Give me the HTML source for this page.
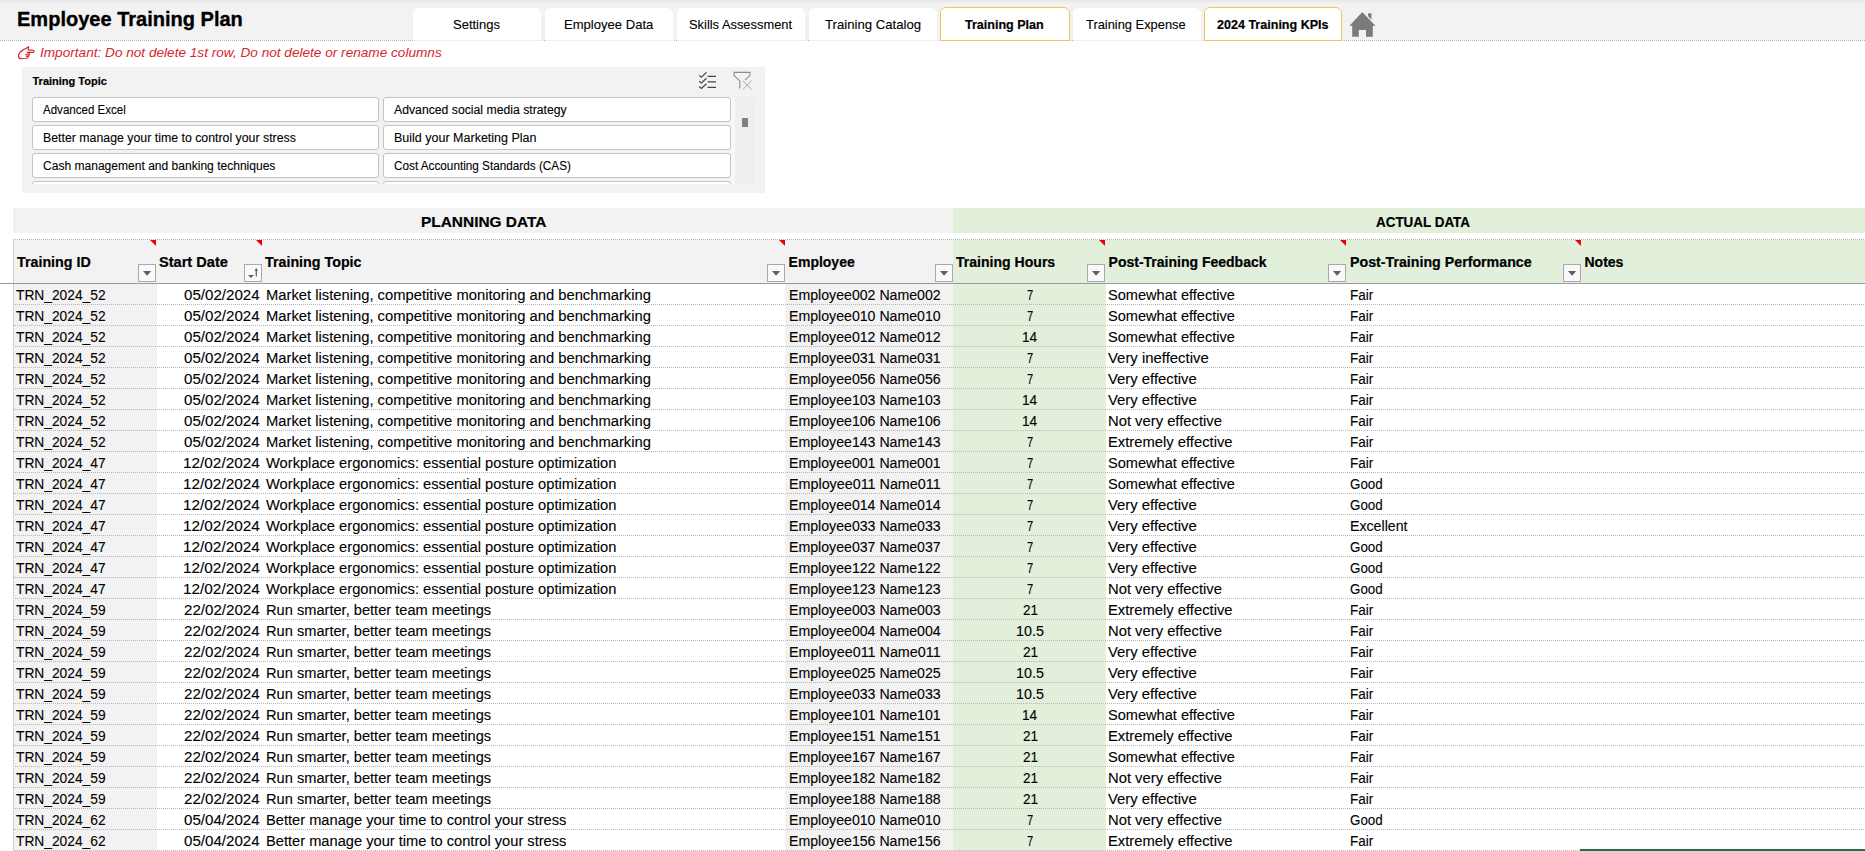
<!DOCTYPE html>
<html><head><meta charset="utf-8"><style>
html,body{margin:0;padding:0;}
body{width:1865px;height:851px;overflow:hidden;position:relative;background:#fff;font-family:"Liberation Sans", sans-serif;}
.t{position:absolute;white-space:nowrap;transform-origin:0 0;color:#000;}
.r{-webkit-text-stroke:0.1px currentColor;}
.bb{-webkit-text-stroke:0.2px currentColor;}
.a{position:absolute;}
</style></head><body>
<div class=a style='left:0px;top:0px;width:1865px;height:40px;background:#f2f2f2;'></div>
<div class=a style='left:0px;top:0px;width:1865px;height:4px;background:linear-gradient(#e6e6e6,#f2f2f2);'></div>
<div class=a style='left:0px;top:40px;width:1865px;height:1px;background:repeating-linear-gradient(90deg,#b6b6b6 0 1px,transparent 1px 2px);'></div>
<div class=a style='left:413px;top:8px;width:128px;height:32px;background:#fff;border-bottom:1px solid #f0f0f0;border-radius:6px 6px 0 0;'></div>
<div class=a style='left:545px;top:8px;width:128px;height:32px;background:#fff;border-bottom:1px solid #f0f0f0;border-radius:6px 6px 0 0;'></div>
<div class=a style='left:677px;top:8px;width:128px;height:32px;background:#fff;border-bottom:1px solid #f0f0f0;border-radius:6px 6px 0 0;'></div>
<div class=a style='left:809px;top:8px;width:128px;height:32px;background:#fff;border-bottom:1px solid #f0f0f0;border-radius:6px 6px 0 0;'></div>
<div class=a style='left:940px;top:7px;width:128px;height:32px;background:#fff;border:1px solid #efc658;border-radius:6px 6px 0 0;'></div>
<div class=a style='left:1073px;top:8px;width:128px;height:32px;background:#fff;border-bottom:1px solid #f0f0f0;border-radius:6px 6px 0 0;'></div>
<div class=a style='left:1204px;top:7px;width:136px;height:32px;background:#fff;border:1px solid #efc658;border-radius:6px 6px 0 0;'></div>
<svg class=a style='left:1344px;top:6px' width='40' height='36' viewBox='0 0 40 36'>
<path d='M24.1 7.2h3.4v6.5l-3.4-3z' fill='#7b7b7b'/>
<path d='M18.4 5.9L5.5 19.7h2.7v11h6.6v-6.8h7.2v6.8h6.8v-11h2.9z' fill='#7b7b7b'/>
<path d='M18.4 5.2L31.9 19.4' stroke='#f2f2f2' stroke-width='1.2'/>
<path d='M18.4 5.9L31.7 19.7' stroke='#7b7b7b' stroke-width='0.1'/>
</svg>
<svg class=a style='left:14px;top:42px' width='24' height='20' viewBox='0 0 24 20'>
<g fill='none' stroke='#cc2229' stroke-width='1.15' stroke-linejoin='round' stroke-linecap='round'>
<path d='M12.7 16.5L7.3 16.7C5.5 16.5 4.3 15 4.5 13.2C4.8 11 6.5 9.5 8.9 8L12.7 6.1L14.6 4.6L14.2 7.9L19.3 8.3C20.3 8.5 20.3 10.1 19.3 10.3L15.8 10.3L15 12.2L14.6 14.1L12.7 16.5'/>
<path d='M11.6 12.2H15M12 14.1H14.6M13.2 10.3H15.8'/>
</g>
</svg>
<div class=a style='left:22px;top:67px;width:743px;height:126px;background:#f2f2f2;'></div>
<div class=a style='left:0;top:97px;width:760px;height:87px;overflow:hidden'>
<div class=a style='left:32px;top:0px;width:345px;height:23px;background:#fff;border:1px solid #c4c4c4;border-radius:3px;'></div>
<div class=a style='left:383px;top:0px;width:346px;height:23px;background:#fff;border:1px solid #c4c4c4;border-radius:3px;'></div>
<div class=a style='left:32px;top:28px;width:345px;height:23px;background:#fff;border:1px solid #c4c4c4;border-radius:3px;'></div>
<div class=a style='left:383px;top:28px;width:346px;height:23px;background:#fff;border:1px solid #c4c4c4;border-radius:3px;'></div>
<div class=a style='left:32px;top:56px;width:345px;height:23px;background:#fff;border:1px solid #c4c4c4;border-radius:3px;'></div>
<div class=a style='left:383px;top:56px;width:346px;height:23px;background:#fff;border:1px solid #c4c4c4;border-radius:3px;'></div>
<div class=a style='left:32px;top:84px;width:345px;height:23px;background:#fff;border:1px solid #c4c4c4;border-radius:3px;'></div>
<div class=a style='left:383px;top:84px;width:346px;height:23px;background:#fff;border:1px solid #c4c4c4;border-radius:3px;'></div>
</div>
<div class=a style='left:731px;top:97px;width:4px;height:87px;background:#f8f8f8;'></div>
<div class=a style='left:735px;top:97px;width:19px;height:87px;background:#efefef;'></div>
<div class=a style='left:742px;top:118px;width:6px;height:9px;background:#808080;'></div>
<svg class=a style='left:692px;top:66px' width='66' height='30' viewBox='0 0 66 30'>
<g fill='none' stroke='#454545' stroke-width='1.2'>
<path d='M7.1 9.4L9.4 11.3L14.5 6.4'/><path d='M7.1 15.2L9.4 16.9L14.5 12.2'/><path d='M7.1 20.5L9.4 22.4L14.5 17.7'/>
<path d='M15.6 10.3H24M15.6 15.9H24M15.6 21.4H24' stroke-width='1.3'/>
</g>
<g fill='none' stroke='#8c8c8c' stroke-width='1.1'>
<path d='M47.8 22.6V14.9L42.1 9.6V6.4H57.9V9.6L53.1 13.8'/>
</g>
<g fill='none' stroke='#a8a8a8' stroke-width='1'>
<path d='M51 14.9L59.8 23.5M50.8 23.5L59.8 14.5'/>
</g>
</svg>
<div class=a style='left:13px;top:208px;width:940px;height:25px;background:#f2f2f2;'></div>
<div class=a style='left:953px;top:208px;width:912px;height:25px;background:#e2efda;'></div>
<div class=a style='left:13px;top:239px;width:1852px;height:1px;background:repeating-linear-gradient(90deg,#b6b6b6 0 1px,transparent 1px 2px);'></div>
<div class=a style='left:13px;top:240px;width:940px;height:43px;background:#f2f2f2;'></div>
<div class=a style='left:953px;top:240px;width:912px;height:43px;background:#e2efda;'></div>
<div class=a style='left:13px;top:284px;width:144px;height:567px;background:#f2f2f2;'></div>
<div class=a style='left:785px;top:284px;width:168px;height:567px;background:#f2f2f2;'></div>
<div class=a style='left:953px;top:284px;width:153px;height:567px;background:#e2efda;'></div>
<div class=a style='left:0px;top:283px;width:1865px;height:1px;background:#9a9a9a;'></div>
<div class=a style='left:13px;top:304px;width:1852px;height:1px;background:repeating-linear-gradient(90deg,#b6b6b6 0 1px,transparent 1px 2px);'></div>
<div class=a style='left:13px;top:325px;width:1852px;height:1px;background:repeating-linear-gradient(90deg,#b6b6b6 0 1px,transparent 1px 2px);'></div>
<div class=a style='left:13px;top:346px;width:1852px;height:1px;background:repeating-linear-gradient(90deg,#b6b6b6 0 1px,transparent 1px 2px);'></div>
<div class=a style='left:13px;top:367px;width:1852px;height:1px;background:repeating-linear-gradient(90deg,#b6b6b6 0 1px,transparent 1px 2px);'></div>
<div class=a style='left:13px;top:388px;width:1852px;height:1px;background:repeating-linear-gradient(90deg,#b6b6b6 0 1px,transparent 1px 2px);'></div>
<div class=a style='left:13px;top:409px;width:1852px;height:1px;background:repeating-linear-gradient(90deg,#b6b6b6 0 1px,transparent 1px 2px);'></div>
<div class=a style='left:13px;top:430px;width:1852px;height:1px;background:repeating-linear-gradient(90deg,#b6b6b6 0 1px,transparent 1px 2px);'></div>
<div class=a style='left:13px;top:451px;width:1852px;height:1px;background:repeating-linear-gradient(90deg,#b6b6b6 0 1px,transparent 1px 2px);'></div>
<div class=a style='left:13px;top:472px;width:1852px;height:1px;background:repeating-linear-gradient(90deg,#b6b6b6 0 1px,transparent 1px 2px);'></div>
<div class=a style='left:13px;top:493px;width:1852px;height:1px;background:repeating-linear-gradient(90deg,#b6b6b6 0 1px,transparent 1px 2px);'></div>
<div class=a style='left:13px;top:514px;width:1852px;height:1px;background:repeating-linear-gradient(90deg,#b6b6b6 0 1px,transparent 1px 2px);'></div>
<div class=a style='left:13px;top:535px;width:1852px;height:1px;background:repeating-linear-gradient(90deg,#b6b6b6 0 1px,transparent 1px 2px);'></div>
<div class=a style='left:13px;top:556px;width:1852px;height:1px;background:repeating-linear-gradient(90deg,#b6b6b6 0 1px,transparent 1px 2px);'></div>
<div class=a style='left:13px;top:577px;width:1852px;height:1px;background:repeating-linear-gradient(90deg,#b6b6b6 0 1px,transparent 1px 2px);'></div>
<div class=a style='left:13px;top:598px;width:1852px;height:1px;background:repeating-linear-gradient(90deg,#b6b6b6 0 1px,transparent 1px 2px);'></div>
<div class=a style='left:13px;top:619px;width:1852px;height:1px;background:repeating-linear-gradient(90deg,#b6b6b6 0 1px,transparent 1px 2px);'></div>
<div class=a style='left:13px;top:640px;width:1852px;height:1px;background:repeating-linear-gradient(90deg,#b6b6b6 0 1px,transparent 1px 2px);'></div>
<div class=a style='left:13px;top:661px;width:1852px;height:1px;background:repeating-linear-gradient(90deg,#b6b6b6 0 1px,transparent 1px 2px);'></div>
<div class=a style='left:13px;top:682px;width:1852px;height:1px;background:repeating-linear-gradient(90deg,#b6b6b6 0 1px,transparent 1px 2px);'></div>
<div class=a style='left:13px;top:703px;width:1852px;height:1px;background:repeating-linear-gradient(90deg,#b6b6b6 0 1px,transparent 1px 2px);'></div>
<div class=a style='left:13px;top:724px;width:1852px;height:1px;background:repeating-linear-gradient(90deg,#b6b6b6 0 1px,transparent 1px 2px);'></div>
<div class=a style='left:13px;top:745px;width:1852px;height:1px;background:repeating-linear-gradient(90deg,#b6b6b6 0 1px,transparent 1px 2px);'></div>
<div class=a style='left:13px;top:766px;width:1852px;height:1px;background:repeating-linear-gradient(90deg,#b6b6b6 0 1px,transparent 1px 2px);'></div>
<div class=a style='left:13px;top:787px;width:1852px;height:1px;background:repeating-linear-gradient(90deg,#b6b6b6 0 1px,transparent 1px 2px);'></div>
<div class=a style='left:13px;top:808px;width:1852px;height:1px;background:repeating-linear-gradient(90deg,#b6b6b6 0 1px,transparent 1px 2px);'></div>
<div class=a style='left:13px;top:829px;width:1852px;height:1px;background:repeating-linear-gradient(90deg,#b6b6b6 0 1px,transparent 1px 2px);'></div>
<div class=a style='left:13px;top:850px;width:1852px;height:1px;background:repeating-linear-gradient(90deg,#b6b6b6 0 1px,transparent 1px 2px);'></div>
<div class=a style='left:13px;top:240px;width:1px;height:611px;background:repeating-linear-gradient(180deg,#b6b6b6 0 1px,transparent 1px 2px);'></div>
<div class=a style='left:138px;top:264px;width:16px;height:16px;background:#f9f9fb;border:1px solid #a9a9a9;'></div>
<svg class=a style='left:138px;top:264px' width='18' height='18' viewBox='0 0 18 18'><path d='M5 7H13.2L9.1 11.8Z' fill='#5f5f5f'/></svg>
<div class=a style='left:767px;top:264px;width:16px;height:16px;background:#f9f9fb;border:1px solid #a9a9a9;'></div>
<svg class=a style='left:767px;top:264px' width='18' height='18' viewBox='0 0 18 18'><path d='M5 7H13.2L9.1 11.8Z' fill='#5f5f5f'/></svg>
<div class=a style='left:935px;top:264px;width:16px;height:16px;background:#f9f9fb;border:1px solid #a9a9a9;'></div>
<svg class=a style='left:935px;top:264px' width='18' height='18' viewBox='0 0 18 18'><path d='M5 7H13.2L9.1 11.8Z' fill='#5f5f5f'/></svg>
<div class=a style='left:1087px;top:264px;width:16px;height:16px;background:#f9f9fb;border:1px solid #a9a9a9;'></div>
<svg class=a style='left:1087px;top:264px' width='18' height='18' viewBox='0 0 18 18'><path d='M5 7H13.2L9.1 11.8Z' fill='#5f5f5f'/></svg>
<div class=a style='left:1328px;top:264px;width:16px;height:16px;background:#f9f9fb;border:1px solid #a9a9a9;'></div>
<svg class=a style='left:1328px;top:264px' width='18' height='18' viewBox='0 0 18 18'><path d='M5 7H13.2L9.1 11.8Z' fill='#5f5f5f'/></svg>
<div class=a style='left:1563px;top:264px;width:16px;height:16px;background:#f9f9fb;border:1px solid #a9a9a9;'></div>
<svg class=a style='left:1563px;top:264px' width='18' height='18' viewBox='0 0 18 18'><path d='M5 7H13.2L9.1 11.8Z' fill='#5f5f5f'/></svg>
<div class=a style='left:244px;top:264px;width:16px;height:16px;background:#f9f9fb;border:1px solid #a9a9a9;'></div>
<svg class=a style='left:244px;top:264px' width='18' height='18' viewBox='0 0 18 18'><path d='M4 11H10L7 14Z' fill='#5f5f5f'/><path d='M12.3 4.5V12.5' stroke='#5f5f5f' stroke-width='1.2'/><path d='M10.6 7L12.3 4.3L14 7Z' fill='#5f5f5f'/></svg>
<svg class=a style='left:150px;top:240px' width='6' height='6' viewBox='0 0 6 6'><path d='M0 0H6V6Z' fill='#e8000b'/></svg>
<svg class=a style='left:256px;top:240px' width='6' height='6' viewBox='0 0 6 6'><path d='M0 0H6V6Z' fill='#e8000b'/></svg>
<svg class=a style='left:779px;top:240px' width='6' height='6' viewBox='0 0 6 6'><path d='M0 0H6V6Z' fill='#e8000b'/></svg>
<svg class=a style='left:1099px;top:240px' width='6' height='6' viewBox='0 0 6 6'><path d='M0 0H6V6Z' fill='#e8000b'/></svg>
<svg class=a style='left:1340px;top:240px' width='6' height='6' viewBox='0 0 6 6'><path d='M0 0H6V6Z' fill='#e8000b'/></svg>
<svg class=a style='left:1575px;top:240px' width='6' height='6' viewBox='0 0 6 6'><path d='M0 0H6V6Z' fill='#e8000b'/></svg>
<div class=a style='left:1580px;top:849px;width:285px;height:2px;background:#217346;'></div>
<div class='t bb' style='left:17.05px;top:9px;font-family:"Liberation Sans", sans-serif;font-size:21px;font-weight:bold;font-style:normal;line-height:20px;transform:scaleX(0.9532);-webkit-text-stroke:0.35px #000;'>Employee Training Plan</div>
<div class='t r' style='left:453.00px;top:15px;font-family:"Liberation Sans", sans-serif;font-size:13px;font-weight:normal;font-style:normal;line-height:20px;'>Settings</div>
<div class='t r' style='left:564.00px;top:15px;font-family:"Liberation Sans", sans-serif;font-size:13px;font-weight:normal;font-style:normal;line-height:20px;transform:scaleX(1.0045);'>Employee Data</div>
<div class='t r' style='left:689.00px;top:15px;font-family:"Liberation Sans", sans-serif;font-size:13px;font-weight:normal;font-style:normal;line-height:20px;transform:scaleX(0.9904);'>Skills Assessment</div>
<div class='t r' style='left:824.50px;top:15px;font-family:"Liberation Sans", sans-serif;font-size:13px;font-weight:normal;font-style:normal;line-height:20px;transform:scaleX(1.0126);'>Training Catalog</div>
<div class='t bb' style='left:965.00px;top:15px;font-family:"Liberation Sans", sans-serif;font-size:13px;font-weight:bold;font-style:normal;line-height:20px;transform:scaleX(0.9634);'>Training Plan</div>
<div class='t r' style='left:1086.30px;top:15px;font-family:"Liberation Sans", sans-serif;font-size:13px;font-weight:normal;font-style:normal;line-height:20px;transform:scaleX(0.9901);'>Training Expense</div>
<div class='t bb' style='left:1217.00px;top:15px;font-family:"Liberation Sans", sans-serif;font-size:13px;font-weight:bold;font-style:normal;line-height:20px;transform:scaleX(0.9652);'>2024 Training KPIs</div>
<div class='t' style='left:40.00px;top:43px;font-family:"Liberation Sans", sans-serif;font-size:13px;font-weight:normal;font-style:italic;line-height:20px;transform:scaleX(1.0469);color:#d6262d;'>Important: Do not delete 1st row, Do not delete or rename columns</div>
<div class='t bb' style='left:32.50px;top:71px;font-family:"Liberation Sans", sans-serif;font-size:11px;font-weight:bold;font-style:normal;line-height:20px;'>Training Topic</div>
<div class='t r' style='left:42.60px;top:100px;font-family:"Liberation Sans", sans-serif;font-size:12px;font-weight:normal;font-style:normal;line-height:20px;transform:scaleX(0.9616);'>Advanced Excel</div>
<div class='t r' style='left:393.50px;top:100px;font-family:"Liberation Sans", sans-serif;font-size:12px;font-weight:normal;font-style:normal;line-height:20px;transform:scaleX(1.0194);'>Advanced social media strategy</div>
<div class='t r' style='left:42.60px;top:128px;font-family:"Liberation Sans", sans-serif;font-size:12px;font-weight:normal;font-style:normal;line-height:20px;transform:scaleX(1.0276);'>Better manage your time to control your stress</div>
<div class='t r' style='left:393.50px;top:128px;font-family:"Liberation Sans", sans-serif;font-size:12px;font-weight:normal;font-style:normal;line-height:20px;transform:scaleX(1.0423);'>Build your Marketing Plan</div>
<div class='t r' style='left:42.60px;top:156px;font-family:"Liberation Sans", sans-serif;font-size:12px;font-weight:normal;font-style:normal;line-height:20px;transform:scaleX(1.0039);'>Cash management and banking techniques</div>
<div class='t r' style='left:393.50px;top:156px;font-family:"Liberation Sans", sans-serif;font-size:12px;font-weight:normal;font-style:normal;line-height:20px;transform:scaleX(0.9785);'>Cost Accounting Standards (CAS)</div>
<div class='t bb' style='left:420.60px;top:212px;font-family:"Liberation Sans", sans-serif;font-size:14px;font-weight:bold;font-style:normal;line-height:20px;transform:scaleX(1.1018);'>PLANNING DATA</div>
<div class='t bb' style='left:1376.40px;top:212px;font-family:"Liberation Sans", sans-serif;font-size:14px;font-weight:bold;font-style:normal;line-height:20px;transform:scaleX(0.9592);'>ACTUAL DATA</div>
<div class='t bb' style='left:16.50px;top:252px;font-family:"Liberation Sans", sans-serif;font-size:14px;font-weight:bold;font-style:normal;line-height:20px;transform:scaleX(1.0194);'>Training ID</div>
<div class='t bb' style='left:159.30px;top:252px;font-family:"Liberation Sans", sans-serif;font-size:14px;font-weight:bold;font-style:normal;line-height:20px;transform:scaleX(1.0409);'>Start Date</div>
<div class='t bb' style='left:265.10px;top:252px;font-family:"Liberation Sans", sans-serif;font-size:14px;font-weight:bold;font-style:normal;line-height:20px;transform:scaleX(1.0200);'>Training Topic</div>
<div class='t bb' style='left:788.60px;top:252px;font-family:"Liberation Sans", sans-serif;font-size:14px;font-weight:bold;font-style:normal;line-height:20px;'>Employee</div>
<div class='t bb' style='left:956.40px;top:252px;font-family:"Liberation Sans", sans-serif;font-size:14px;font-weight:bold;font-style:normal;line-height:20px;transform:scaleX(1.0040);'>Training Hours</div>
<div class='t bb' style='left:1108.60px;top:252px;font-family:"Liberation Sans", sans-serif;font-size:14px;font-weight:bold;font-style:normal;line-height:20px;'>Post-Training Feedback</div>
<div class='t bb' style='left:1349.70px;top:252px;font-family:"Liberation Sans", sans-serif;font-size:14px;font-weight:bold;font-style:normal;line-height:20px;transform:scaleX(1.0151);'>Post-Training Performance</div>
<div class='t bb' style='left:1584.50px;top:252px;font-family:"Liberation Sans", sans-serif;font-size:14px;font-weight:bold;font-style:normal;line-height:20px;'>Notes</div>
<div class='t r' style='left:16.00px;top:285px;font-family:"Liberation Sans", sans-serif;font-size:14px;font-weight:normal;font-style:normal;line-height:20px;transform:scaleX(0.9835);'>TRN_2024_52</div>
<div class='t r' style='left:184.20px;top:285px;font-family:"Liberation Sans", sans-serif;font-size:14px;font-weight:normal;font-style:normal;line-height:20px;transform:scaleX(1.0800);'>05/02/2024</div>
<div class='t r' style='left:266.00px;top:285px;font-family:"Liberation Sans", sans-serif;font-size:14px;font-weight:normal;font-style:normal;line-height:20px;transform:scaleX(1.0548);'>Market listening, competitive monitoring and benchmarking</div>
<div class='t r' style='left:788.80px;top:285px;font-family:"Liberation Sans", sans-serif;font-size:14px;font-weight:normal;font-style:normal;line-height:20px;transform:scaleX(1.0100);'>Employee002 Name002</div>
<div class='t r' style='left:1026.80px;top:285px;font-family:"Liberation Sans", sans-serif;font-size:14px;font-weight:normal;font-style:normal;line-height:20px;transform:scaleX(0.8000);'>7</div>
<div class='t r' style='left:1108.30px;top:285px;font-family:"Liberation Sans", sans-serif;font-size:14px;font-weight:normal;font-style:normal;line-height:20px;transform:scaleX(1.0410);'>Somewhat effective</div>
<div class='t r' style='left:1349.90px;top:285px;font-family:"Liberation Sans", sans-serif;font-size:14px;font-weight:normal;font-style:normal;line-height:20px;transform:scaleX(0.9667);'>Fair</div>
<div class='t r' style='left:16.00px;top:306px;font-family:"Liberation Sans", sans-serif;font-size:14px;font-weight:normal;font-style:normal;line-height:20px;transform:scaleX(0.9835);'>TRN_2024_52</div>
<div class='t r' style='left:184.20px;top:306px;font-family:"Liberation Sans", sans-serif;font-size:14px;font-weight:normal;font-style:normal;line-height:20px;transform:scaleX(1.0800);'>05/02/2024</div>
<div class='t r' style='left:266.00px;top:306px;font-family:"Liberation Sans", sans-serif;font-size:14px;font-weight:normal;font-style:normal;line-height:20px;transform:scaleX(1.0548);'>Market listening, competitive monitoring and benchmarking</div>
<div class='t r' style='left:788.80px;top:306px;font-family:"Liberation Sans", sans-serif;font-size:14px;font-weight:normal;font-style:normal;line-height:20px;transform:scaleX(1.0100);'>Employee010 Name010</div>
<div class='t r' style='left:1026.80px;top:306px;font-family:"Liberation Sans", sans-serif;font-size:14px;font-weight:normal;font-style:normal;line-height:20px;transform:scaleX(0.8000);'>7</div>
<div class='t r' style='left:1108.30px;top:306px;font-family:"Liberation Sans", sans-serif;font-size:14px;font-weight:normal;font-style:normal;line-height:20px;transform:scaleX(1.0410);'>Somewhat effective</div>
<div class='t r' style='left:1349.90px;top:306px;font-family:"Liberation Sans", sans-serif;font-size:14px;font-weight:normal;font-style:normal;line-height:20px;transform:scaleX(0.9667);'>Fair</div>
<div class='t r' style='left:16.00px;top:327px;font-family:"Liberation Sans", sans-serif;font-size:14px;font-weight:normal;font-style:normal;line-height:20px;transform:scaleX(0.9835);'>TRN_2024_52</div>
<div class='t r' style='left:184.20px;top:327px;font-family:"Liberation Sans", sans-serif;font-size:14px;font-weight:normal;font-style:normal;line-height:20px;transform:scaleX(1.0800);'>05/02/2024</div>
<div class='t r' style='left:266.00px;top:327px;font-family:"Liberation Sans", sans-serif;font-size:14px;font-weight:normal;font-style:normal;line-height:20px;transform:scaleX(1.0548);'>Market listening, competitive monitoring and benchmarking</div>
<div class='t r' style='left:788.80px;top:327px;font-family:"Liberation Sans", sans-serif;font-size:14px;font-weight:normal;font-style:normal;line-height:20px;transform:scaleX(1.0100);'>Employee012 Name012</div>
<div class='t r' style='left:1021.73px;top:327px;font-family:"Liberation Sans", sans-serif;font-size:14px;font-weight:normal;font-style:normal;line-height:20px;transform:scaleX(0.9733);'>14</div>
<div class='t r' style='left:1108.30px;top:327px;font-family:"Liberation Sans", sans-serif;font-size:14px;font-weight:normal;font-style:normal;line-height:20px;transform:scaleX(1.0410);'>Somewhat effective</div>
<div class='t r' style='left:1349.90px;top:327px;font-family:"Liberation Sans", sans-serif;font-size:14px;font-weight:normal;font-style:normal;line-height:20px;transform:scaleX(0.9667);'>Fair</div>
<div class='t r' style='left:16.00px;top:348px;font-family:"Liberation Sans", sans-serif;font-size:14px;font-weight:normal;font-style:normal;line-height:20px;transform:scaleX(0.9835);'>TRN_2024_52</div>
<div class='t r' style='left:184.20px;top:348px;font-family:"Liberation Sans", sans-serif;font-size:14px;font-weight:normal;font-style:normal;line-height:20px;transform:scaleX(1.0800);'>05/02/2024</div>
<div class='t r' style='left:266.00px;top:348px;font-family:"Liberation Sans", sans-serif;font-size:14px;font-weight:normal;font-style:normal;line-height:20px;transform:scaleX(1.0548);'>Market listening, competitive monitoring and benchmarking</div>
<div class='t r' style='left:788.80px;top:348px;font-family:"Liberation Sans", sans-serif;font-size:14px;font-weight:normal;font-style:normal;line-height:20px;transform:scaleX(1.0100);'>Employee031 Name031</div>
<div class='t r' style='left:1026.80px;top:348px;font-family:"Liberation Sans", sans-serif;font-size:14px;font-weight:normal;font-style:normal;line-height:20px;transform:scaleX(0.8000);'>7</div>
<div class='t r' style='left:1108.30px;top:348px;font-family:"Liberation Sans", sans-serif;font-size:14px;font-weight:normal;font-style:normal;line-height:20px;transform:scaleX(1.0632);'>Very ineffective</div>
<div class='t r' style='left:1349.90px;top:348px;font-family:"Liberation Sans", sans-serif;font-size:14px;font-weight:normal;font-style:normal;line-height:20px;transform:scaleX(0.9667);'>Fair</div>
<div class='t r' style='left:16.00px;top:369px;font-family:"Liberation Sans", sans-serif;font-size:14px;font-weight:normal;font-style:normal;line-height:20px;transform:scaleX(0.9835);'>TRN_2024_52</div>
<div class='t r' style='left:184.20px;top:369px;font-family:"Liberation Sans", sans-serif;font-size:14px;font-weight:normal;font-style:normal;line-height:20px;transform:scaleX(1.0800);'>05/02/2024</div>
<div class='t r' style='left:266.00px;top:369px;font-family:"Liberation Sans", sans-serif;font-size:14px;font-weight:normal;font-style:normal;line-height:20px;transform:scaleX(1.0548);'>Market listening, competitive monitoring and benchmarking</div>
<div class='t r' style='left:788.80px;top:369px;font-family:"Liberation Sans", sans-serif;font-size:14px;font-weight:normal;font-style:normal;line-height:20px;transform:scaleX(1.0100);'>Employee056 Name056</div>
<div class='t r' style='left:1026.80px;top:369px;font-family:"Liberation Sans", sans-serif;font-size:14px;font-weight:normal;font-style:normal;line-height:20px;transform:scaleX(0.8000);'>7</div>
<div class='t r' style='left:1108.30px;top:369px;font-family:"Liberation Sans", sans-serif;font-size:14px;font-weight:normal;font-style:normal;line-height:20px;transform:scaleX(1.0595);'>Very effective</div>
<div class='t r' style='left:1349.90px;top:369px;font-family:"Liberation Sans", sans-serif;font-size:14px;font-weight:normal;font-style:normal;line-height:20px;transform:scaleX(0.9667);'>Fair</div>
<div class='t r' style='left:16.00px;top:390px;font-family:"Liberation Sans", sans-serif;font-size:14px;font-weight:normal;font-style:normal;line-height:20px;transform:scaleX(0.9835);'>TRN_2024_52</div>
<div class='t r' style='left:184.20px;top:390px;font-family:"Liberation Sans", sans-serif;font-size:14px;font-weight:normal;font-style:normal;line-height:20px;transform:scaleX(1.0800);'>05/02/2024</div>
<div class='t r' style='left:266.00px;top:390px;font-family:"Liberation Sans", sans-serif;font-size:14px;font-weight:normal;font-style:normal;line-height:20px;transform:scaleX(1.0548);'>Market listening, competitive monitoring and benchmarking</div>
<div class='t r' style='left:788.80px;top:390px;font-family:"Liberation Sans", sans-serif;font-size:14px;font-weight:normal;font-style:normal;line-height:20px;transform:scaleX(1.0100);'>Employee103 Name103</div>
<div class='t r' style='left:1021.73px;top:390px;font-family:"Liberation Sans", sans-serif;font-size:14px;font-weight:normal;font-style:normal;line-height:20px;transform:scaleX(0.9733);'>14</div>
<div class='t r' style='left:1108.30px;top:390px;font-family:"Liberation Sans", sans-serif;font-size:14px;font-weight:normal;font-style:normal;line-height:20px;transform:scaleX(1.0595);'>Very effective</div>
<div class='t r' style='left:1349.90px;top:390px;font-family:"Liberation Sans", sans-serif;font-size:14px;font-weight:normal;font-style:normal;line-height:20px;transform:scaleX(0.9667);'>Fair</div>
<div class='t r' style='left:16.00px;top:411px;font-family:"Liberation Sans", sans-serif;font-size:14px;font-weight:normal;font-style:normal;line-height:20px;transform:scaleX(0.9835);'>TRN_2024_52</div>
<div class='t r' style='left:184.20px;top:411px;font-family:"Liberation Sans", sans-serif;font-size:14px;font-weight:normal;font-style:normal;line-height:20px;transform:scaleX(1.0800);'>05/02/2024</div>
<div class='t r' style='left:266.00px;top:411px;font-family:"Liberation Sans", sans-serif;font-size:14px;font-weight:normal;font-style:normal;line-height:20px;transform:scaleX(1.0548);'>Market listening, competitive monitoring and benchmarking</div>
<div class='t r' style='left:788.80px;top:411px;font-family:"Liberation Sans", sans-serif;font-size:14px;font-weight:normal;font-style:normal;line-height:20px;transform:scaleX(1.0100);'>Employee106 Name106</div>
<div class='t r' style='left:1021.73px;top:411px;font-family:"Liberation Sans", sans-serif;font-size:14px;font-weight:normal;font-style:normal;line-height:20px;transform:scaleX(0.9733);'>14</div>
<div class='t r' style='left:1108.30px;top:411px;font-family:"Liberation Sans", sans-serif;font-size:14px;font-weight:normal;font-style:normal;line-height:20px;transform:scaleX(1.0556);'>Not very effective</div>
<div class='t r' style='left:1349.90px;top:411px;font-family:"Liberation Sans", sans-serif;font-size:14px;font-weight:normal;font-style:normal;line-height:20px;transform:scaleX(0.9667);'>Fair</div>
<div class='t r' style='left:16.00px;top:432px;font-family:"Liberation Sans", sans-serif;font-size:14px;font-weight:normal;font-style:normal;line-height:20px;transform:scaleX(0.9835);'>TRN_2024_52</div>
<div class='t r' style='left:184.20px;top:432px;font-family:"Liberation Sans", sans-serif;font-size:14px;font-weight:normal;font-style:normal;line-height:20px;transform:scaleX(1.0800);'>05/02/2024</div>
<div class='t r' style='left:266.00px;top:432px;font-family:"Liberation Sans", sans-serif;font-size:14px;font-weight:normal;font-style:normal;line-height:20px;transform:scaleX(1.0548);'>Market listening, competitive monitoring and benchmarking</div>
<div class='t r' style='left:788.80px;top:432px;font-family:"Liberation Sans", sans-serif;font-size:14px;font-weight:normal;font-style:normal;line-height:20px;transform:scaleX(1.0100);'>Employee143 Name143</div>
<div class='t r' style='left:1026.80px;top:432px;font-family:"Liberation Sans", sans-serif;font-size:14px;font-weight:normal;font-style:normal;line-height:20px;transform:scaleX(0.8000);'>7</div>
<div class='t r' style='left:1108.30px;top:432px;font-family:"Liberation Sans", sans-serif;font-size:14px;font-weight:normal;font-style:normal;line-height:20px;transform:scaleX(1.0551);'>Extremely effective</div>
<div class='t r' style='left:1349.90px;top:432px;font-family:"Liberation Sans", sans-serif;font-size:14px;font-weight:normal;font-style:normal;line-height:20px;transform:scaleX(0.9667);'>Fair</div>
<div class='t r' style='left:16.00px;top:453px;font-family:"Liberation Sans", sans-serif;font-size:14px;font-weight:normal;font-style:normal;line-height:20px;transform:scaleX(0.9835);'>TRN_2024_47</div>
<div class='t r' style='left:183.10px;top:453px;font-family:"Liberation Sans", sans-serif;font-size:14px;font-weight:normal;font-style:normal;line-height:20px;transform:scaleX(1.0957);'>12/02/2024</div>
<div class='t r' style='left:266.00px;top:453px;font-family:"Liberation Sans", sans-serif;font-size:14px;font-weight:normal;font-style:normal;line-height:20px;transform:scaleX(1.0479);'>Workplace ergonomics: essential posture optimization</div>
<div class='t r' style='left:788.80px;top:453px;font-family:"Liberation Sans", sans-serif;font-size:14px;font-weight:normal;font-style:normal;line-height:20px;transform:scaleX(1.0100);'>Employee001 Name001</div>
<div class='t r' style='left:1026.80px;top:453px;font-family:"Liberation Sans", sans-serif;font-size:14px;font-weight:normal;font-style:normal;line-height:20px;transform:scaleX(0.8000);'>7</div>
<div class='t r' style='left:1108.30px;top:453px;font-family:"Liberation Sans", sans-serif;font-size:14px;font-weight:normal;font-style:normal;line-height:20px;transform:scaleX(1.0410);'>Somewhat effective</div>
<div class='t r' style='left:1349.90px;top:453px;font-family:"Liberation Sans", sans-serif;font-size:14px;font-weight:normal;font-style:normal;line-height:20px;transform:scaleX(0.9667);'>Fair</div>
<div class='t r' style='left:16.00px;top:474px;font-family:"Liberation Sans", sans-serif;font-size:14px;font-weight:normal;font-style:normal;line-height:20px;transform:scaleX(0.9835);'>TRN_2024_47</div>
<div class='t r' style='left:183.10px;top:474px;font-family:"Liberation Sans", sans-serif;font-size:14px;font-weight:normal;font-style:normal;line-height:20px;transform:scaleX(1.0957);'>12/02/2024</div>
<div class='t r' style='left:266.00px;top:474px;font-family:"Liberation Sans", sans-serif;font-size:14px;font-weight:normal;font-style:normal;line-height:20px;transform:scaleX(1.0479);'>Workplace ergonomics: essential posture optimization</div>
<div class='t r' style='left:788.80px;top:474px;font-family:"Liberation Sans", sans-serif;font-size:14px;font-weight:normal;font-style:normal;line-height:20px;transform:scaleX(1.0236);'>Employee011 Name011</div>
<div class='t r' style='left:1026.80px;top:474px;font-family:"Liberation Sans", sans-serif;font-size:14px;font-weight:normal;font-style:normal;line-height:20px;transform:scaleX(0.8000);'>7</div>
<div class='t r' style='left:1108.30px;top:474px;font-family:"Liberation Sans", sans-serif;font-size:14px;font-weight:normal;font-style:normal;line-height:20px;transform:scaleX(1.0410);'>Somewhat effective</div>
<div class='t r' style='left:1349.90px;top:474px;font-family:"Liberation Sans", sans-serif;font-size:14px;font-weight:normal;font-style:normal;line-height:20px;transform:scaleX(0.9559);'>Good</div>
<div class='t r' style='left:16.00px;top:495px;font-family:"Liberation Sans", sans-serif;font-size:14px;font-weight:normal;font-style:normal;line-height:20px;transform:scaleX(0.9835);'>TRN_2024_47</div>
<div class='t r' style='left:183.10px;top:495px;font-family:"Liberation Sans", sans-serif;font-size:14px;font-weight:normal;font-style:normal;line-height:20px;transform:scaleX(1.0957);'>12/02/2024</div>
<div class='t r' style='left:266.00px;top:495px;font-family:"Liberation Sans", sans-serif;font-size:14px;font-weight:normal;font-style:normal;line-height:20px;transform:scaleX(1.0479);'>Workplace ergonomics: essential posture optimization</div>
<div class='t r' style='left:788.80px;top:495px;font-family:"Liberation Sans", sans-serif;font-size:14px;font-weight:normal;font-style:normal;line-height:20px;transform:scaleX(1.0100);'>Employee014 Name014</div>
<div class='t r' style='left:1026.80px;top:495px;font-family:"Liberation Sans", sans-serif;font-size:14px;font-weight:normal;font-style:normal;line-height:20px;transform:scaleX(0.8000);'>7</div>
<div class='t r' style='left:1108.30px;top:495px;font-family:"Liberation Sans", sans-serif;font-size:14px;font-weight:normal;font-style:normal;line-height:20px;transform:scaleX(1.0595);'>Very effective</div>
<div class='t r' style='left:1349.90px;top:495px;font-family:"Liberation Sans", sans-serif;font-size:14px;font-weight:normal;font-style:normal;line-height:20px;transform:scaleX(0.9559);'>Good</div>
<div class='t r' style='left:16.00px;top:516px;font-family:"Liberation Sans", sans-serif;font-size:14px;font-weight:normal;font-style:normal;line-height:20px;transform:scaleX(0.9835);'>TRN_2024_47</div>
<div class='t r' style='left:183.10px;top:516px;font-family:"Liberation Sans", sans-serif;font-size:14px;font-weight:normal;font-style:normal;line-height:20px;transform:scaleX(1.0957);'>12/02/2024</div>
<div class='t r' style='left:266.00px;top:516px;font-family:"Liberation Sans", sans-serif;font-size:14px;font-weight:normal;font-style:normal;line-height:20px;transform:scaleX(1.0479);'>Workplace ergonomics: essential posture optimization</div>
<div class='t r' style='left:788.80px;top:516px;font-family:"Liberation Sans", sans-serif;font-size:14px;font-weight:normal;font-style:normal;line-height:20px;transform:scaleX(1.0100);'>Employee033 Name033</div>
<div class='t r' style='left:1026.80px;top:516px;font-family:"Liberation Sans", sans-serif;font-size:14px;font-weight:normal;font-style:normal;line-height:20px;transform:scaleX(0.8000);'>7</div>
<div class='t r' style='left:1108.30px;top:516px;font-family:"Liberation Sans", sans-serif;font-size:14px;font-weight:normal;font-style:normal;line-height:20px;transform:scaleX(1.0595);'>Very effective</div>
<div class='t r' style='left:1349.90px;top:516px;font-family:"Liberation Sans", sans-serif;font-size:14px;font-weight:normal;font-style:normal;line-height:20px;transform:scaleX(1.0123);'>Excellent</div>
<div class='t r' style='left:16.00px;top:537px;font-family:"Liberation Sans", sans-serif;font-size:14px;font-weight:normal;font-style:normal;line-height:20px;transform:scaleX(0.9835);'>TRN_2024_47</div>
<div class='t r' style='left:183.10px;top:537px;font-family:"Liberation Sans", sans-serif;font-size:14px;font-weight:normal;font-style:normal;line-height:20px;transform:scaleX(1.0957);'>12/02/2024</div>
<div class='t r' style='left:266.00px;top:537px;font-family:"Liberation Sans", sans-serif;font-size:14px;font-weight:normal;font-style:normal;line-height:20px;transform:scaleX(1.0479);'>Workplace ergonomics: essential posture optimization</div>
<div class='t r' style='left:788.80px;top:537px;font-family:"Liberation Sans", sans-serif;font-size:14px;font-weight:normal;font-style:normal;line-height:20px;transform:scaleX(1.0100);'>Employee037 Name037</div>
<div class='t r' style='left:1026.80px;top:537px;font-family:"Liberation Sans", sans-serif;font-size:14px;font-weight:normal;font-style:normal;line-height:20px;transform:scaleX(0.8000);'>7</div>
<div class='t r' style='left:1108.30px;top:537px;font-family:"Liberation Sans", sans-serif;font-size:14px;font-weight:normal;font-style:normal;line-height:20px;transform:scaleX(1.0595);'>Very effective</div>
<div class='t r' style='left:1349.90px;top:537px;font-family:"Liberation Sans", sans-serif;font-size:14px;font-weight:normal;font-style:normal;line-height:20px;transform:scaleX(0.9559);'>Good</div>
<div class='t r' style='left:16.00px;top:558px;font-family:"Liberation Sans", sans-serif;font-size:14px;font-weight:normal;font-style:normal;line-height:20px;transform:scaleX(0.9835);'>TRN_2024_47</div>
<div class='t r' style='left:183.10px;top:558px;font-family:"Liberation Sans", sans-serif;font-size:14px;font-weight:normal;font-style:normal;line-height:20px;transform:scaleX(1.0957);'>12/02/2024</div>
<div class='t r' style='left:266.00px;top:558px;font-family:"Liberation Sans", sans-serif;font-size:14px;font-weight:normal;font-style:normal;line-height:20px;transform:scaleX(1.0479);'>Workplace ergonomics: essential posture optimization</div>
<div class='t r' style='left:788.80px;top:558px;font-family:"Liberation Sans", sans-serif;font-size:14px;font-weight:normal;font-style:normal;line-height:20px;transform:scaleX(1.0100);'>Employee122 Name122</div>
<div class='t r' style='left:1026.80px;top:558px;font-family:"Liberation Sans", sans-serif;font-size:14px;font-weight:normal;font-style:normal;line-height:20px;transform:scaleX(0.8000);'>7</div>
<div class='t r' style='left:1108.30px;top:558px;font-family:"Liberation Sans", sans-serif;font-size:14px;font-weight:normal;font-style:normal;line-height:20px;transform:scaleX(1.0595);'>Very effective</div>
<div class='t r' style='left:1349.90px;top:558px;font-family:"Liberation Sans", sans-serif;font-size:14px;font-weight:normal;font-style:normal;line-height:20px;transform:scaleX(0.9559);'>Good</div>
<div class='t r' style='left:16.00px;top:579px;font-family:"Liberation Sans", sans-serif;font-size:14px;font-weight:normal;font-style:normal;line-height:20px;transform:scaleX(0.9835);'>TRN_2024_47</div>
<div class='t r' style='left:183.10px;top:579px;font-family:"Liberation Sans", sans-serif;font-size:14px;font-weight:normal;font-style:normal;line-height:20px;transform:scaleX(1.0957);'>12/02/2024</div>
<div class='t r' style='left:266.00px;top:579px;font-family:"Liberation Sans", sans-serif;font-size:14px;font-weight:normal;font-style:normal;line-height:20px;transform:scaleX(1.0479);'>Workplace ergonomics: essential posture optimization</div>
<div class='t r' style='left:788.80px;top:579px;font-family:"Liberation Sans", sans-serif;font-size:14px;font-weight:normal;font-style:normal;line-height:20px;transform:scaleX(1.0100);'>Employee123 Name123</div>
<div class='t r' style='left:1026.80px;top:579px;font-family:"Liberation Sans", sans-serif;font-size:14px;font-weight:normal;font-style:normal;line-height:20px;transform:scaleX(0.8000);'>7</div>
<div class='t r' style='left:1108.30px;top:579px;font-family:"Liberation Sans", sans-serif;font-size:14px;font-weight:normal;font-style:normal;line-height:20px;transform:scaleX(1.0556);'>Not very effective</div>
<div class='t r' style='left:1349.90px;top:579px;font-family:"Liberation Sans", sans-serif;font-size:14px;font-weight:normal;font-style:normal;line-height:20px;transform:scaleX(0.9559);'>Good</div>
<div class='t r' style='left:16.00px;top:600px;font-family:"Liberation Sans", sans-serif;font-size:14px;font-weight:normal;font-style:normal;line-height:20px;transform:scaleX(0.9835);'>TRN_2024_59</div>
<div class='t r' style='left:184.20px;top:600px;font-family:"Liberation Sans", sans-serif;font-size:14px;font-weight:normal;font-style:normal;line-height:20px;transform:scaleX(1.0800);'>22/02/2024</div>
<div class='t r' style='left:266.00px;top:600px;font-family:"Liberation Sans", sans-serif;font-size:14px;font-weight:normal;font-style:normal;line-height:20px;transform:scaleX(1.0444);'>Run smarter, better team meetings</div>
<div class='t r' style='left:788.80px;top:600px;font-family:"Liberation Sans", sans-serif;font-size:14px;font-weight:normal;font-style:normal;line-height:20px;transform:scaleX(1.0100);'>Employee003 Name003</div>
<div class='t r' style='left:1022.70px;top:600px;font-family:"Liberation Sans", sans-serif;font-size:14px;font-weight:normal;font-style:normal;line-height:20px;transform:scaleX(0.9733);'>21</div>
<div class='t r' style='left:1108.30px;top:600px;font-family:"Liberation Sans", sans-serif;font-size:14px;font-weight:normal;font-style:normal;line-height:20px;transform:scaleX(1.0551);'>Extremely effective</div>
<div class='t r' style='left:1349.90px;top:600px;font-family:"Liberation Sans", sans-serif;font-size:14px;font-weight:normal;font-style:normal;line-height:20px;transform:scaleX(0.9667);'>Fair</div>
<div class='t r' style='left:16.00px;top:621px;font-family:"Liberation Sans", sans-serif;font-size:14px;font-weight:normal;font-style:normal;line-height:20px;transform:scaleX(0.9835);'>TRN_2024_59</div>
<div class='t r' style='left:184.20px;top:621px;font-family:"Liberation Sans", sans-serif;font-size:14px;font-weight:normal;font-style:normal;line-height:20px;transform:scaleX(1.0800);'>22/02/2024</div>
<div class='t r' style='left:266.00px;top:621px;font-family:"Liberation Sans", sans-serif;font-size:14px;font-weight:normal;font-style:normal;line-height:20px;transform:scaleX(1.0444);'>Run smarter, better team meetings</div>
<div class='t r' style='left:788.80px;top:621px;font-family:"Liberation Sans", sans-serif;font-size:14px;font-weight:normal;font-style:normal;line-height:20px;transform:scaleX(1.0100);'>Employee004 Name004</div>
<div class='t r' style='left:1015.68px;top:621px;font-family:"Liberation Sans", sans-serif;font-size:14px;font-weight:normal;font-style:normal;line-height:20px;transform:scaleX(1.0231);'>10.5</div>
<div class='t r' style='left:1108.30px;top:621px;font-family:"Liberation Sans", sans-serif;font-size:14px;font-weight:normal;font-style:normal;line-height:20px;transform:scaleX(1.0556);'>Not very effective</div>
<div class='t r' style='left:1349.90px;top:621px;font-family:"Liberation Sans", sans-serif;font-size:14px;font-weight:normal;font-style:normal;line-height:20px;transform:scaleX(0.9667);'>Fair</div>
<div class='t r' style='left:16.00px;top:642px;font-family:"Liberation Sans", sans-serif;font-size:14px;font-weight:normal;font-style:normal;line-height:20px;transform:scaleX(0.9835);'>TRN_2024_59</div>
<div class='t r' style='left:184.20px;top:642px;font-family:"Liberation Sans", sans-serif;font-size:14px;font-weight:normal;font-style:normal;line-height:20px;transform:scaleX(1.0800);'>22/02/2024</div>
<div class='t r' style='left:266.00px;top:642px;font-family:"Liberation Sans", sans-serif;font-size:14px;font-weight:normal;font-style:normal;line-height:20px;transform:scaleX(1.0444);'>Run smarter, better team meetings</div>
<div class='t r' style='left:788.80px;top:642px;font-family:"Liberation Sans", sans-serif;font-size:14px;font-weight:normal;font-style:normal;line-height:20px;transform:scaleX(1.0236);'>Employee011 Name011</div>
<div class='t r' style='left:1022.70px;top:642px;font-family:"Liberation Sans", sans-serif;font-size:14px;font-weight:normal;font-style:normal;line-height:20px;transform:scaleX(0.9733);'>21</div>
<div class='t r' style='left:1108.30px;top:642px;font-family:"Liberation Sans", sans-serif;font-size:14px;font-weight:normal;font-style:normal;line-height:20px;transform:scaleX(1.0595);'>Very effective</div>
<div class='t r' style='left:1349.90px;top:642px;font-family:"Liberation Sans", sans-serif;font-size:14px;font-weight:normal;font-style:normal;line-height:20px;transform:scaleX(0.9667);'>Fair</div>
<div class='t r' style='left:16.00px;top:663px;font-family:"Liberation Sans", sans-serif;font-size:14px;font-weight:normal;font-style:normal;line-height:20px;transform:scaleX(0.9835);'>TRN_2024_59</div>
<div class='t r' style='left:184.20px;top:663px;font-family:"Liberation Sans", sans-serif;font-size:14px;font-weight:normal;font-style:normal;line-height:20px;transform:scaleX(1.0800);'>22/02/2024</div>
<div class='t r' style='left:266.00px;top:663px;font-family:"Liberation Sans", sans-serif;font-size:14px;font-weight:normal;font-style:normal;line-height:20px;transform:scaleX(1.0444);'>Run smarter, better team meetings</div>
<div class='t r' style='left:788.80px;top:663px;font-family:"Liberation Sans", sans-serif;font-size:14px;font-weight:normal;font-style:normal;line-height:20px;transform:scaleX(1.0100);'>Employee025 Name025</div>
<div class='t r' style='left:1015.68px;top:663px;font-family:"Liberation Sans", sans-serif;font-size:14px;font-weight:normal;font-style:normal;line-height:20px;transform:scaleX(1.0231);'>10.5</div>
<div class='t r' style='left:1108.30px;top:663px;font-family:"Liberation Sans", sans-serif;font-size:14px;font-weight:normal;font-style:normal;line-height:20px;transform:scaleX(1.0595);'>Very effective</div>
<div class='t r' style='left:1349.90px;top:663px;font-family:"Liberation Sans", sans-serif;font-size:14px;font-weight:normal;font-style:normal;line-height:20px;transform:scaleX(0.9667);'>Fair</div>
<div class='t r' style='left:16.00px;top:684px;font-family:"Liberation Sans", sans-serif;font-size:14px;font-weight:normal;font-style:normal;line-height:20px;transform:scaleX(0.9835);'>TRN_2024_59</div>
<div class='t r' style='left:184.20px;top:684px;font-family:"Liberation Sans", sans-serif;font-size:14px;font-weight:normal;font-style:normal;line-height:20px;transform:scaleX(1.0800);'>22/02/2024</div>
<div class='t r' style='left:266.00px;top:684px;font-family:"Liberation Sans", sans-serif;font-size:14px;font-weight:normal;font-style:normal;line-height:20px;transform:scaleX(1.0444);'>Run smarter, better team meetings</div>
<div class='t r' style='left:788.80px;top:684px;font-family:"Liberation Sans", sans-serif;font-size:14px;font-weight:normal;font-style:normal;line-height:20px;transform:scaleX(1.0100);'>Employee033 Name033</div>
<div class='t r' style='left:1015.68px;top:684px;font-family:"Liberation Sans", sans-serif;font-size:14px;font-weight:normal;font-style:normal;line-height:20px;transform:scaleX(1.0231);'>10.5</div>
<div class='t r' style='left:1108.30px;top:684px;font-family:"Liberation Sans", sans-serif;font-size:14px;font-weight:normal;font-style:normal;line-height:20px;transform:scaleX(1.0595);'>Very effective</div>
<div class='t r' style='left:1349.90px;top:684px;font-family:"Liberation Sans", sans-serif;font-size:14px;font-weight:normal;font-style:normal;line-height:20px;transform:scaleX(0.9667);'>Fair</div>
<div class='t r' style='left:16.00px;top:705px;font-family:"Liberation Sans", sans-serif;font-size:14px;font-weight:normal;font-style:normal;line-height:20px;transform:scaleX(0.9835);'>TRN_2024_59</div>
<div class='t r' style='left:184.20px;top:705px;font-family:"Liberation Sans", sans-serif;font-size:14px;font-weight:normal;font-style:normal;line-height:20px;transform:scaleX(1.0800);'>22/02/2024</div>
<div class='t r' style='left:266.00px;top:705px;font-family:"Liberation Sans", sans-serif;font-size:14px;font-weight:normal;font-style:normal;line-height:20px;transform:scaleX(1.0444);'>Run smarter, better team meetings</div>
<div class='t r' style='left:788.80px;top:705px;font-family:"Liberation Sans", sans-serif;font-size:14px;font-weight:normal;font-style:normal;line-height:20px;transform:scaleX(1.0100);'>Employee101 Name101</div>
<div class='t r' style='left:1021.73px;top:705px;font-family:"Liberation Sans", sans-serif;font-size:14px;font-weight:normal;font-style:normal;line-height:20px;transform:scaleX(0.9733);'>14</div>
<div class='t r' style='left:1108.30px;top:705px;font-family:"Liberation Sans", sans-serif;font-size:14px;font-weight:normal;font-style:normal;line-height:20px;transform:scaleX(1.0410);'>Somewhat effective</div>
<div class='t r' style='left:1349.90px;top:705px;font-family:"Liberation Sans", sans-serif;font-size:14px;font-weight:normal;font-style:normal;line-height:20px;transform:scaleX(0.9667);'>Fair</div>
<div class='t r' style='left:16.00px;top:726px;font-family:"Liberation Sans", sans-serif;font-size:14px;font-weight:normal;font-style:normal;line-height:20px;transform:scaleX(0.9835);'>TRN_2024_59</div>
<div class='t r' style='left:184.20px;top:726px;font-family:"Liberation Sans", sans-serif;font-size:14px;font-weight:normal;font-style:normal;line-height:20px;transform:scaleX(1.0800);'>22/02/2024</div>
<div class='t r' style='left:266.00px;top:726px;font-family:"Liberation Sans", sans-serif;font-size:14px;font-weight:normal;font-style:normal;line-height:20px;transform:scaleX(1.0444);'>Run smarter, better team meetings</div>
<div class='t r' style='left:788.80px;top:726px;font-family:"Liberation Sans", sans-serif;font-size:14px;font-weight:normal;font-style:normal;line-height:20px;transform:scaleX(1.0100);'>Employee151 Name151</div>
<div class='t r' style='left:1022.70px;top:726px;font-family:"Liberation Sans", sans-serif;font-size:14px;font-weight:normal;font-style:normal;line-height:20px;transform:scaleX(0.9733);'>21</div>
<div class='t r' style='left:1108.30px;top:726px;font-family:"Liberation Sans", sans-serif;font-size:14px;font-weight:normal;font-style:normal;line-height:20px;transform:scaleX(1.0551);'>Extremely effective</div>
<div class='t r' style='left:1349.90px;top:726px;font-family:"Liberation Sans", sans-serif;font-size:14px;font-weight:normal;font-style:normal;line-height:20px;transform:scaleX(0.9667);'>Fair</div>
<div class='t r' style='left:16.00px;top:747px;font-family:"Liberation Sans", sans-serif;font-size:14px;font-weight:normal;font-style:normal;line-height:20px;transform:scaleX(0.9835);'>TRN_2024_59</div>
<div class='t r' style='left:184.20px;top:747px;font-family:"Liberation Sans", sans-serif;font-size:14px;font-weight:normal;font-style:normal;line-height:20px;transform:scaleX(1.0800);'>22/02/2024</div>
<div class='t r' style='left:266.00px;top:747px;font-family:"Liberation Sans", sans-serif;font-size:14px;font-weight:normal;font-style:normal;line-height:20px;transform:scaleX(1.0444);'>Run smarter, better team meetings</div>
<div class='t r' style='left:788.80px;top:747px;font-family:"Liberation Sans", sans-serif;font-size:14px;font-weight:normal;font-style:normal;line-height:20px;transform:scaleX(1.0100);'>Employee167 Name167</div>
<div class='t r' style='left:1022.70px;top:747px;font-family:"Liberation Sans", sans-serif;font-size:14px;font-weight:normal;font-style:normal;line-height:20px;transform:scaleX(0.9733);'>21</div>
<div class='t r' style='left:1108.30px;top:747px;font-family:"Liberation Sans", sans-serif;font-size:14px;font-weight:normal;font-style:normal;line-height:20px;transform:scaleX(1.0410);'>Somewhat effective</div>
<div class='t r' style='left:1349.90px;top:747px;font-family:"Liberation Sans", sans-serif;font-size:14px;font-weight:normal;font-style:normal;line-height:20px;transform:scaleX(0.9667);'>Fair</div>
<div class='t r' style='left:16.00px;top:768px;font-family:"Liberation Sans", sans-serif;font-size:14px;font-weight:normal;font-style:normal;line-height:20px;transform:scaleX(0.9835);'>TRN_2024_59</div>
<div class='t r' style='left:184.20px;top:768px;font-family:"Liberation Sans", sans-serif;font-size:14px;font-weight:normal;font-style:normal;line-height:20px;transform:scaleX(1.0800);'>22/02/2024</div>
<div class='t r' style='left:266.00px;top:768px;font-family:"Liberation Sans", sans-serif;font-size:14px;font-weight:normal;font-style:normal;line-height:20px;transform:scaleX(1.0444);'>Run smarter, better team meetings</div>
<div class='t r' style='left:788.80px;top:768px;font-family:"Liberation Sans", sans-serif;font-size:14px;font-weight:normal;font-style:normal;line-height:20px;transform:scaleX(1.0100);'>Employee182 Name182</div>
<div class='t r' style='left:1022.70px;top:768px;font-family:"Liberation Sans", sans-serif;font-size:14px;font-weight:normal;font-style:normal;line-height:20px;transform:scaleX(0.9733);'>21</div>
<div class='t r' style='left:1108.30px;top:768px;font-family:"Liberation Sans", sans-serif;font-size:14px;font-weight:normal;font-style:normal;line-height:20px;transform:scaleX(1.0556);'>Not very effective</div>
<div class='t r' style='left:1349.90px;top:768px;font-family:"Liberation Sans", sans-serif;font-size:14px;font-weight:normal;font-style:normal;line-height:20px;transform:scaleX(0.9667);'>Fair</div>
<div class='t r' style='left:16.00px;top:789px;font-family:"Liberation Sans", sans-serif;font-size:14px;font-weight:normal;font-style:normal;line-height:20px;transform:scaleX(0.9835);'>TRN_2024_59</div>
<div class='t r' style='left:184.20px;top:789px;font-family:"Liberation Sans", sans-serif;font-size:14px;font-weight:normal;font-style:normal;line-height:20px;transform:scaleX(1.0800);'>22/02/2024</div>
<div class='t r' style='left:266.00px;top:789px;font-family:"Liberation Sans", sans-serif;font-size:14px;font-weight:normal;font-style:normal;line-height:20px;transform:scaleX(1.0444);'>Run smarter, better team meetings</div>
<div class='t r' style='left:788.80px;top:789px;font-family:"Liberation Sans", sans-serif;font-size:14px;font-weight:normal;font-style:normal;line-height:20px;transform:scaleX(1.0100);'>Employee188 Name188</div>
<div class='t r' style='left:1022.70px;top:789px;font-family:"Liberation Sans", sans-serif;font-size:14px;font-weight:normal;font-style:normal;line-height:20px;transform:scaleX(0.9733);'>21</div>
<div class='t r' style='left:1108.30px;top:789px;font-family:"Liberation Sans", sans-serif;font-size:14px;font-weight:normal;font-style:normal;line-height:20px;transform:scaleX(1.0595);'>Very effective</div>
<div class='t r' style='left:1349.90px;top:789px;font-family:"Liberation Sans", sans-serif;font-size:14px;font-weight:normal;font-style:normal;line-height:20px;transform:scaleX(0.9667);'>Fair</div>
<div class='t r' style='left:16.00px;top:810px;font-family:"Liberation Sans", sans-serif;font-size:14px;font-weight:normal;font-style:normal;line-height:20px;transform:scaleX(0.9835);'>TRN_2024_62</div>
<div class='t r' style='left:184.20px;top:810px;font-family:"Liberation Sans", sans-serif;font-size:14px;font-weight:normal;font-style:normal;line-height:20px;transform:scaleX(1.0800);'>05/04/2024</div>
<div class='t r' style='left:266.00px;top:810px;font-family:"Liberation Sans", sans-serif;font-size:14px;font-weight:normal;font-style:normal;line-height:20px;transform:scaleX(1.0463);'>Better manage your time to control your stress</div>
<div class='t r' style='left:788.80px;top:810px;font-family:"Liberation Sans", sans-serif;font-size:14px;font-weight:normal;font-style:normal;line-height:20px;transform:scaleX(1.0100);'>Employee010 Name010</div>
<div class='t r' style='left:1026.80px;top:810px;font-family:"Liberation Sans", sans-serif;font-size:14px;font-weight:normal;font-style:normal;line-height:20px;transform:scaleX(0.8000);'>7</div>
<div class='t r' style='left:1108.30px;top:810px;font-family:"Liberation Sans", sans-serif;font-size:14px;font-weight:normal;font-style:normal;line-height:20px;transform:scaleX(1.0556);'>Not very effective</div>
<div class='t r' style='left:1349.90px;top:810px;font-family:"Liberation Sans", sans-serif;font-size:14px;font-weight:normal;font-style:normal;line-height:20px;transform:scaleX(0.9559);'>Good</div>
<div class='t r' style='left:16.00px;top:831px;font-family:"Liberation Sans", sans-serif;font-size:14px;font-weight:normal;font-style:normal;line-height:20px;transform:scaleX(0.9835);'>TRN_2024_62</div>
<div class='t r' style='left:184.20px;top:831px;font-family:"Liberation Sans", sans-serif;font-size:14px;font-weight:normal;font-style:normal;line-height:20px;transform:scaleX(1.0800);'>05/04/2024</div>
<div class='t r' style='left:266.00px;top:831px;font-family:"Liberation Sans", sans-serif;font-size:14px;font-weight:normal;font-style:normal;line-height:20px;transform:scaleX(1.0463);'>Better manage your time to control your stress</div>
<div class='t r' style='left:788.80px;top:831px;font-family:"Liberation Sans", sans-serif;font-size:14px;font-weight:normal;font-style:normal;line-height:20px;transform:scaleX(1.0100);'>Employee156 Name156</div>
<div class='t r' style='left:1026.80px;top:831px;font-family:"Liberation Sans", sans-serif;font-size:14px;font-weight:normal;font-style:normal;line-height:20px;transform:scaleX(0.8000);'>7</div>
<div class='t r' style='left:1108.30px;top:831px;font-family:"Liberation Sans", sans-serif;font-size:14px;font-weight:normal;font-style:normal;line-height:20px;transform:scaleX(1.0551);'>Extremely effective</div>
<div class='t r' style='left:1349.90px;top:831px;font-family:"Liberation Sans", sans-serif;font-size:14px;font-weight:normal;font-style:normal;line-height:20px;transform:scaleX(0.9667);'>Fair</div>
</body></html>
